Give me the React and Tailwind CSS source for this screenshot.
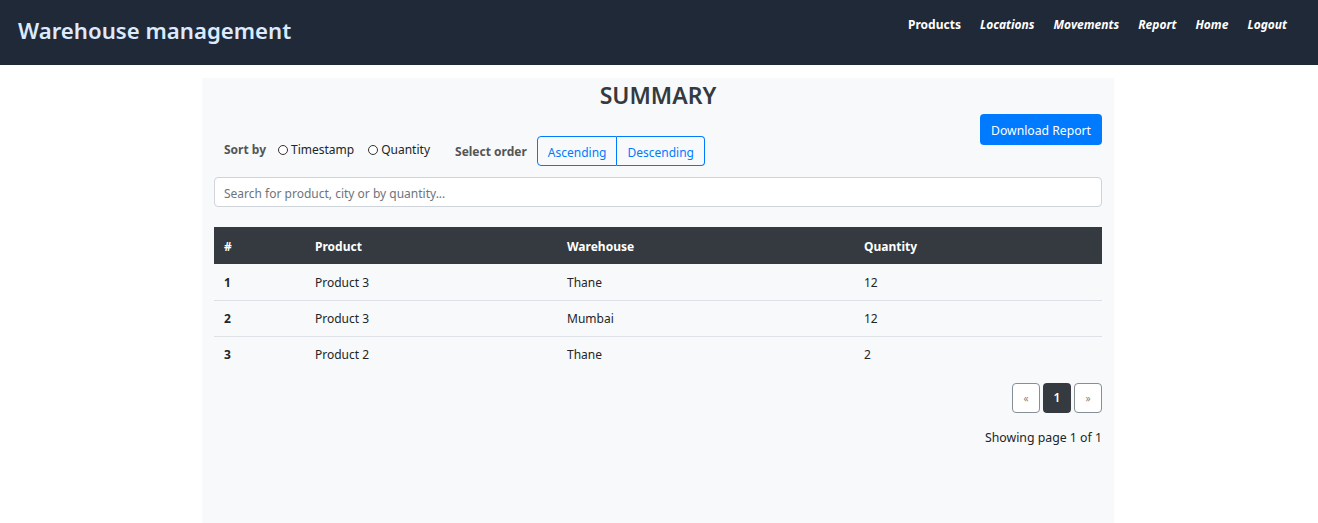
export default function App() {
  const rows = [
    ["1", "Product 3", "Thane", "12"],
    ["2", "Product 3", "Mumbai", "12"],
    ["3", "Product 2", "Thane", "2"],
  ];
  return (
    <div className="min-h-[523px] bg-white flex flex-col" style={{ fontFamily: '"Noto Sans", "Open Sans", sans-serif' }}>
      <nav className="h-[65px] bg-[#202938] flex items-start justify-between px-[18px] shrink-0">
        <div className="text-[22.2px] font-semibold text-[#dbeafe] leading-none mt-[20px]">Warehouse management</div>
        <div className="flex items-center gap-[19px] mt-[16px] mr-[13px] text-[12px] font-bold text-white">
          <span>Products</span>
          <span className="italic">Locations</span>
          <span className="italic">Movements</span>
          <span className="italic">Report</span>
          <span className="italic">Home</span>
          <span className="italic">Logout</span>
        </div>
      </nav>
      <div className="flex-1 flex justify-center pt-[13px]">
        <div className="w-[912px] bg-[#f8f9fa] px-[12px] pb-[20px] -translate-x-[1px]">
          <h1 className="text-center text-[23px] font-semibold text-[#343a40] leading-[34px]">SUMMARY</h1>
          <div className="flex items-start justify-between">
            <div className="flex items-center mt-[24px] text-[12px] text-[#212529]">
              <span className="font-bold text-[#555] ml-[10px] mr-[12px] mt-[-3px]">Sort by</span>
              <label className="flex items-center gap-[3px] mr-[14px] mt-[-3px]">
                <span className="w-[10px] h-[10px] rounded-full border border-[#333] bg-white inline-block"></span>
                Timestamp
              </label>
              <label className="flex items-center gap-[3px] mr-[25px] mt-[-3px]">
                <span className="w-[10px] h-[10px] rounded-full border border-[#333] bg-white inline-block"></span>
                Quantity
              </label>
              <span className="font-bold text-[#555] mr-[10px] mt-[2px]">Select order</span>
              <div className="flex">
                <button className="h-[30px] px-[10px] pt-[3px] border border-[#007bff] text-[#007bff] rounded-l-[4px] text-[12px] bg-transparent">Ascending</button>
                <button className="h-[30px] px-[10px] pt-[3px] border border-l-0 border-[#007bff] text-[#007bff] rounded-r-[4px] text-[12px] bg-transparent">Descending</button>
              </div>
            </div>
            <button className="mt-[2px] h-[31px] px-[11px] pt-[3px] bg-[#007bff] text-white text-[12.2px] rounded-[4px]">Download Report</button>
          </div>
          <input
            className="mt-[11px] w-full h-[30px] border border-[#ced4da] rounded-[4px] bg-white px-[9px] pt-[2px] text-[12px] placeholder:text-[#6c757d] outline-none"
            placeholder="Search for product, city or by quantity..."
          />
          <table className="mt-[20px] w-full text-[12px] text-[#212529] border-collapse">
            <thead>
              <tr className="bg-[#343a40] text-white h-[37px]">
                <th className="text-left font-bold pl-[10px] pt-[2px] w-[91px]">#</th>
                <th className="text-left font-bold pl-[10px] pt-[2px] w-[252px]">Product</th>
                <th className="text-left font-bold pl-[10px] pt-[2px] w-[297px]">Warehouse</th>
                <th className="text-left font-bold pl-[10px] pt-[2px]">Quantity</th>
              </tr>
            </thead>
            <tbody>
              {rows.map((r, i) => (
                <tr key={i} className={"h-[36px] " + (i < rows.length - 1 ? "border-b border-[#dee2e6]" : "")}>
                  <td className="pl-[10px] pt-[2px] font-bold">{r[0]}</td>
                  <td className="pl-[10px] pt-[2px]">{r[1]}</td>
                  <td className="pl-[10px] pt-[2px]">{r[2]}</td>
                  <td className="pl-[10px] pt-[2px]">{r[3]}</td>
                </tr>
              ))}
            </tbody>
          </table>
          <div className="flex justify-end gap-[3px] mt-[11px]">
            <button className="w-[28px] h-[30px] border border-[#868e96] rounded-[4px] text-[10px] text-[#888] bg-white">«</button>
            <button className="w-[28px] h-[30px] rounded-[4px] bg-[#343a40] text-white text-[12px] font-semibold">1</button>
            <button className="w-[28px] h-[30px] border border-[#868e96] rounded-[4px] text-[10px] text-[#888] bg-white">»</button>
          </div>
          <div className="text-right text-[12.3px] text-[#212529] mt-[16px]">Showing page 1 of 1</div>
        </div>
      </div>
    </div>
  );
}
